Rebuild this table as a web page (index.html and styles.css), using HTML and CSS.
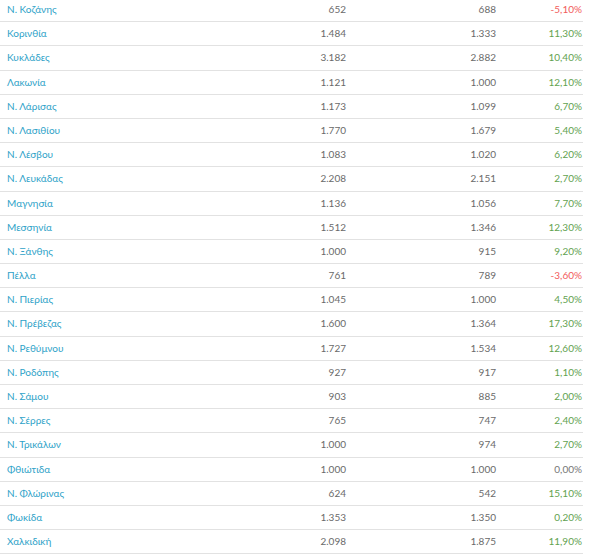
FILE: index.html
```html
<!DOCTYPE html>
<html lang="el">
<head>
<meta charset="utf-8">
<link rel="stylesheet" href="styles.css">
</head>
<body>
<table class="stats">
<tbody>
<tr><td class="name">Ν. Κοζάνης</td><td class="num">652</td><td class="num">688</td><td class="pct neg">-5,10%</td></tr>
<tr><td class="name">Κορινθία</td><td class="num">1.484</td><td class="num">1.333</td><td class="pct pos">11,30%</td></tr>
<tr><td class="name">Κυκλάδες</td><td class="num">3.182</td><td class="num">2.882</td><td class="pct pos">10,40%</td></tr>
<tr><td class="name">Λακωνία</td><td class="num">1.121</td><td class="num">1.000</td><td class="pct pos">12,10%</td></tr>
<tr><td class="name">Ν. Λάρισας</td><td class="num">1.173</td><td class="num">1.099</td><td class="pct pos">6,70%</td></tr>
<tr><td class="name">Ν. Λασιθίου</td><td class="num">1.770</td><td class="num">1.679</td><td class="pct pos">5,40%</td></tr>
<tr><td class="name">Ν. Λέσβου</td><td class="num">1.083</td><td class="num">1.020</td><td class="pct pos">6,20%</td></tr>
<tr><td class="name">Ν. Λευκάδας</td><td class="num">2.208</td><td class="num">2.151</td><td class="pct pos">2,70%</td></tr>
<tr><td class="name">Μαγνησία</td><td class="num">1.136</td><td class="num">1.056</td><td class="pct pos">7,70%</td></tr>
<tr><td class="name">Μεσσηνία</td><td class="num">1.512</td><td class="num">1.346</td><td class="pct pos">12,30%</td></tr>
<tr><td class="name">Ν. Ξάνθης</td><td class="num">1.000</td><td class="num">915</td><td class="pct pos">9,20%</td></tr>
<tr><td class="name">Πέλλα</td><td class="num">761</td><td class="num">789</td><td class="pct neg">-3,60%</td></tr>
<tr><td class="name">Ν. Πιερίας</td><td class="num">1.045</td><td class="num">1.000</td><td class="pct pos">4,50%</td></tr>
<tr><td class="name">Ν. Πρέβεζας</td><td class="num">1.600</td><td class="num">1.364</td><td class="pct pos">17,30%</td></tr>
<tr><td class="name">Ν. Ρεθύμνου</td><td class="num">1.727</td><td class="num">1.534</td><td class="pct pos">12,60%</td></tr>
<tr><td class="name">Ν. Ροδόπης</td><td class="num">927</td><td class="num">917</td><td class="pct pos">1,10%</td></tr>
<tr><td class="name">Ν. Σάμου</td><td class="num">903</td><td class="num">885</td><td class="pct pos">2,00%</td></tr>
<tr><td class="name">Ν. Σέρρες</td><td class="num">765</td><td class="num">747</td><td class="pct pos">2,40%</td></tr>
<tr><td class="name">Ν. Τρικάλων</td><td class="num">1.000</td><td class="num">974</td><td class="pct pos">2,70%</td></tr>
<tr><td class="name">Φθιώτιδα</td><td class="num">1.000</td><td class="num">1.000</td><td class="pct zero">0,00%</td></tr>
<tr><td class="name">Ν. Φλώρινας</td><td class="num">624</td><td class="num">542</td><td class="pct pos">15,10%</td></tr>
<tr><td class="name">Φωκίδα</td><td class="num">1.353</td><td class="num">1.350</td><td class="pct pos">0,20%</td></tr>
<tr><td class="name">Χαλκιδική</td><td class="num">2.098</td><td class="num">1.875</td><td class="pct pos">11,90%</td></tr>
</tbody>
</table>
</body>
</html>
```
FILE: styles.css
```css
html, body {
  margin: 0;
  padding: 0;
  background: #fff;
}
body {
  font-family: Lato, "Noto Sans", sans-serif;
  font-size: 10px;
  color: #6a6a6a;
}
.stats {
  width: 583px;
  margin-top: -2px;
  border-collapse: collapse;
  table-layout: fixed;
}
.stats td {
  padding: 0;
  height: 23.18px;
  line-height: 23.18px;
  border-bottom: 1px solid #e2e2e2;
  white-space: nowrap;
}
.stats td:nth-child(1) { width: 193px; padding-left: 7px; }
.stats td:nth-child(2) { width: 146px; padding-right: 4px; }
.stats td:nth-child(3) { width: 146px; padding-right: 4px; }
.stats td:nth-child(4) { width: 82px; padding-right: 1px; }
.name { color: #2ea2c8; text-align: left; }
.num { text-align: right; color: #6a6a6a; }
.pct { text-align: right; }
.pos { color: #62a250; }
.neg { color: #f25c5c; }
.zero { color: #777; }
```
